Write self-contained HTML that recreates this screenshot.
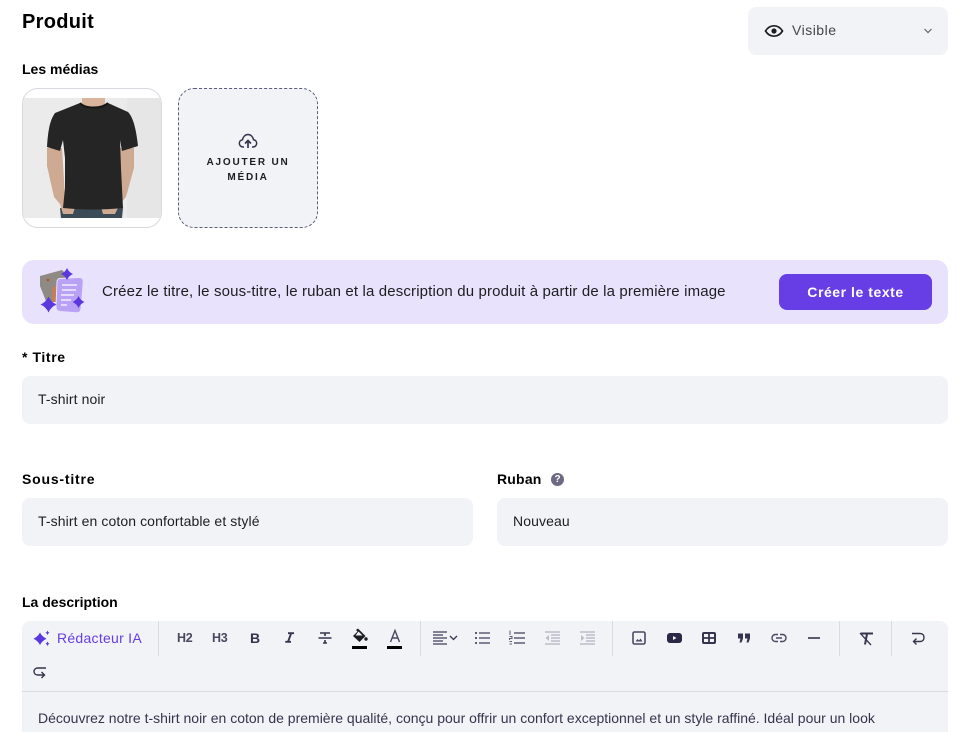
<!DOCTYPE html>
<html lang="fr"><head><meta charset="utf-8"><title>Produit</title>
<style>
html,body{margin:0;padding:0;background:#fff}
body{width:972px;height:732px;overflow:hidden;position:relative;font-family:"Liberation Sans",sans-serif;color:#1d1e20}
.a{position:absolute;white-space:nowrap}
.lbl{font-weight:700;font-size:14px;line-height:18px;color:#000}
.box{position:absolute;background:#f2f3f6;border-radius:8px}
.val{font-size:14px;line-height:18px;color:#1d1e20;letter-spacing:.1px}
.ic{position:absolute;overflow:visible;fill:none;stroke:#36344d;stroke-width:1.6}
.sep{position:absolute;width:1px;background:#dadce0;top:621px;height:35px}
</style></head><body>
<div class="a" style="left:22px;top:10px;font-size:20px;line-height:25px;font-weight:700;color:#000;letter-spacing:.3px">Produit</div>
<div class="a lbl" style="left:22px;top:60px">Les médias</div>

<div class="box" style="left:748px;top:7px;width:200px;height:48px"></div>
<svg class="ic" style="left:764px;top:22px" width="20" height="18" viewBox="0 0 20 18"><path d="M1.5 9C4 5 7 3.8 10 3.8S16 5 18.5 9C16 13 13 14.2 10 14.2S4 13 1.5 9Z" style="stroke:#1d1e20;stroke-width:1.7"/><circle cx="10" cy="9" r="2.6" style="fill:#1d1e20;stroke:none"/></svg>
<div class="a" style="left:792px;top:21px;font-size:14px;line-height:18px;color:#43454a;letter-spacing:.5px">Visible</div>
<svg class="ic" style="left:923px;top:27px" width="10" height="8" viewBox="0 0 10 8"><path d="M1.5 2L5 5.5 8.5 2" style="stroke:#60626a;stroke-width:1.2"/></svg>

<div class="a" style="left:22px;top:88px;width:138px;height:138px;border:1px solid #d8dae0;border-radius:16px;overflow:hidden;background:#fff">
<svg style="position:absolute;left:-1px;top:9px" width="140" height="120" viewBox="0 0 140 120">
<rect width="140" height="120" fill="#ebebec"/>
<rect x="105" width="35" height="120" fill="#e6e6e7"/>
<path d="M60 0H83V9L71 14 60 9Z" fill="#d9b59d"/>
<path d="M38 110H101L100 120H39Z" fill="#3a4a56"/>
<path d="M25 50L25 68 32 99 38 106 41 116 51 116 53 109 43 98 40 50Z" fill="#cfaa92"/>
<path d="M112 50L112 70 104 99 98 106 93 116 81 116 79 109 93 98 98 50Z" fill="#cfaa92"/>
<path d="M58 5C63 10 80 10 86 5L106 14C111 19 114 30 116 48L100 53 98 42 99 70 101 110C82 112 60 112 41 110L43 90 43 60 41 42 38 53 25 49C26 32 28 22 33 15Z" fill="#252526"/>
<path d="M58 5C63 11 80 11 86 5" fill="none" stroke="#161616" stroke-width="2"/>
</svg></div>

<div class="a" style="left:178px;top:88px;width:138px;height:138px;border:1px dashed #5d5b78;border-radius:16px;background:#f2f3f6"></div>
<svg class="ic" style="left:238px;top:133px" width="20" height="16" viewBox="0 0 20 16"><path d="M6 14H5.2C3 14 1.3 12.3 1.3 10.3 1.3 8.4 2.7 7 4.5 6.7 5 3.8 7.3 1.5 10 1.5 12.7 1.5 15 3.8 15.5 6.7 17.3 7 18.7 8.4 18.7 10.3 18.7 12.3 17 14 14.8 14H14" style="stroke-width:1.5"/><path d="M10 15V8M7 10.5L10 7.5 13 10.5" style="stroke-width:1.7"/></svg>
<div class="a" style="left:178px;top:155px;width:140px;text-align:center;font-size:10px;line-height:15px;font-weight:700;letter-spacing:1.8px;color:#1d1e20;white-space:normal">AJOUTER UN<br>MÉDIA</div>

<div class="box" style="left:22px;top:260px;width:926px;height:64px;background:#e9e2fd;border-radius:12px"></div>
<svg style="position:absolute;left:38px;top:268px" width="50" height="48" viewBox="0 0 50 48">
<path d="M2 8L24 2 28 6V34L8 33 2 18Z" fill="#8f8a83"/>
<path d="M14 20L22 15 24 34H14Z" fill="#c08058"/>
<circle cx="10" cy="12" r="1.4" fill="#b5532a"/>
<path d="M22 10.5L41 9.5C44 9.300 45.5 11 45.3 14L43 41C42.7 44 41 45 38 44.7L22 43.5C19 43.2 17.800 41.500 18 38.500L19 14C19.100 12 20 10.600 22 10.500Z" fill="#b9a2f5" stroke="#e9e2fd" stroke-width="1"/>
<g stroke="#e9e2fd" stroke-width="1.8" fill="none"><path d="M24 17H39M24 22H38M23 27H36M23 32H33M23 37H29"/></g>
<path d="M29 0Q30.800 4.200 35 6 30.800 7.800 29 12 27.200 7.800 23 6 27.200 4.200 29 0Z" fill="#5b37e0"/>
<path d="M10.500 28.500Q12.900 34.100 18.500 36.500 12.900 38.900 10.500 44.500 8.100 38.900 2.500 36.500 8.100 34.100 10.500 28.500Z" fill="#5b37e0"/>
<path d="M40.500 28Q42.300 32.200 46.500 34 42.300 35.800 40.500 40 38.700 35.800 34.500 34 38.700 32.200 40.500 28Z" fill="#5b37e0"/>
</svg>
<div class="a" style="left:102px;top:283px;font-size:15px;line-height:18px;color:#1d1e20;letter-spacing:.145px">Créez le titre, le sous-titre, le ruban et la description du produit à partir de la première image</div>
<div class="a" style="left:779px;top:274px;width:153px;height:36px;background:#673de6;border-radius:8px;color:#fff;font-weight:700;font-size:14px;line-height:36px;text-align:center;letter-spacing:.55px">Créer le texte</div>

<div class="a lbl" style="left:22px;top:348px;letter-spacing:.6px">* Titre</div>
<div class="box" style="left:22px;top:376px;width:926px;height:48px"></div>
<div class="a val" style="left:38px;top:390px">T-shirt noir</div>

<div class="a lbl" style="left:22px;top:470px;letter-spacing:.8px">Sous-titre</div>
<div class="box" style="left:22px;top:498px;width:451px;height:48px"></div>
<div class="a val" style="left:38px;top:512px">T-shirt en coton confortable et stylé</div>
<div class="a lbl" style="left:497px;top:470px;letter-spacing:.2px">Ruban</div>
<div class="a" style="left:551px;top:473px;width:13px;height:13px;border-radius:50%;background:#6d6b83;color:#fff;font-size:10px;font-weight:700;line-height:13px;text-align:center">?</div>
<div class="box" style="left:497px;top:498px;width:451px;height:48px"></div>
<div class="a val" style="left:513px;top:512px">Nouveau</div>

<div class="a lbl" style="left:22px;top:593px">La description</div>
<div class="a" style="left:22px;top:621px;width:926px;height:111px;background:#f2f3f6;border-radius:8px 8px 0 0"></div>
<div class="a" style="left:22px;top:691px;width:926px;height:1px;background:#d9dbe1"></div>

<svg class="ic" style="left:33px;top:629px" width="18" height="18" viewBox="0 0 18 18"><path d="M7 3.500Q9 7.600 13.500 9.800 9 12 7 16 5 12 .5 9.800 5 7.600 7 3.500Z" style="fill:#5b37e0;stroke:none"/><path d="M14.500 1.500Q15 3.300 16.500 3.800 15 4.300 14.500 6 14 4.300 12.500 3.800 14 3.300 14.500 1.500ZM14.500 12.500Q15 14.300 16.500 14.800 15 15.300 14.500 17 14 15.300 12.500 14.800 14 14.300 14.500 12.500Z" style="fill:#5b37e0;stroke:none"/></svg>
<div class="a" style="left:57px;top:629px;font-size:14px;line-height:18px;color:#673de6;letter-spacing:.27px">Rédacteur IA</div>
<div class="sep" style="left:158px"></div>
<div class="sep" style="left:420px"></div>
<div class="sep" style="left:612px"></div>
<div class="sep" style="left:839px"></div>
<div class="sep" style="left:891px"></div>

<div class="a" style="left:177px;top:630px;font-size:12.5px;line-height:16px;font-weight:700;color:#4a4861;letter-spacing:-.3px">H2</div>
<div class="a" style="left:212px;top:630px;font-size:12.5px;line-height:16px;font-weight:700;color:#4a4861;letter-spacing:-.3px">H3</div>
<div class="a" style="left:250px;top:630px;font-size:14px;line-height:16px;font-weight:700;color:#36344d">B</div>
<svg class="ic" style="left:285px;top:632px" width="9" height="11" viewBox="0 0 9 11"><path d="M3 1.200H9M6.200 1.200L3 9.800M0.300 9.800H6" style="stroke-width:1.900"/></svg>
<svg class="ic" style="left:318px;top:631px" width="14" height="14" viewBox="0 0 14 14"><path d="M2 2H12M0.500 7H13.500M7 2V5M7 9V11.500M5 12H9" style="stroke-width:1.600"/></svg>
<svg class="ic" style="left:352px;top:628px" width="16" height="22" viewBox="0 0 16 22"><path d="M6 0.500L13.500 8 7.500 14 1 8 5.500 3.500 4 2Z" style="fill:#1d1e20;stroke:none"/><path d="M3.500 7.500H10.500L6.500 3.500Z" style="fill:#f2f3f6;stroke:none"/><circle cx="14" cy="11" r="1.700" style="fill:#1d1e20;stroke:none"/><rect y="18" width="15" height="3" style="fill:#000;stroke:none"/></svg>
<svg class="ic" style="left:387px;top:628px" width="16" height="22" viewBox="0 0 16 22"><path d="M3.500 14L8 2.500 12.500 14M5 10H11" style="stroke:#4a4861;stroke-width:1.400"/><rect y="18" width="15" height="3" style="fill:#000;stroke:none"/></svg>

<svg class="ic" style="left:433px;top:631px" width="26" height="14" viewBox="0 0 26 14"><path d="M0 1H14M0 4H10M0 7H14M0 10H10M0 13H14" style="stroke:#5e5c74;stroke-width:1.500"/><path d="M17 5L20.500 8.500 24 5" style="stroke-width:1.300"/></svg>
<svg class="ic" style="left:475px;top:631px" width="15" height="14" viewBox="0 0 15 14"><path d="M4 2H15M4 7H15M4 12H15" style="stroke:#5e5c74;stroke-width:1.500"/><path d="M0 2H2M0 7H2M0 12H2" style="stroke:#5e5c74;stroke-width:2"/></svg>
<svg class="ic" style="left:509px;top:630px" width="16" height="15" viewBox="0 0 16 15"><path d="M5 3H16M5 8H16M5 13H16" style="stroke:#5e5c74;stroke-width:1.500"/><path d="M1 .5V5M.5 6.500H3V8.500H.5V10M.5 11.500H3M.5 14H3" style="stroke:#5e5c74;stroke-width:1"/></svg>
<svg class="ic" style="left:545px;top:631px" width="15" height="14" viewBox="0 0 15 14"><path d="M0 1H15M6 4H15M6 7H15M6 10H15M0 13H15" style="stroke:#bdbdc9;stroke-width:1.500"/><path d="M4 4V10L0.500 7Z" style="fill:#bdbdc9;stroke:none"/></svg>
<svg class="ic" style="left:580px;top:631px" width="15" height="14" viewBox="0 0 15 14"><path d="M0 1H15M6 4H15M6 7H15M6 10H15M0 13H15" style="stroke:#bdbdc9;stroke-width:1.500"/><path d="M1 4V10L4.500 7Z" style="fill:#bdbdc9;stroke:none"/></svg>

<svg class="ic" style="left:632px;top:631px" width="14" height="14" viewBox="0 0 14 14"><rect x="1" y="1" width="12" height="12" rx="1.500" style="stroke:#4a4861;stroke-width:1.600"/><path d="M3.500 10.500L5.500 8 7 9.500 8.500 7.500 10.500 10.500Z" style="fill:#4a4861;stroke:none"/></svg>
<svg class="ic" style="left:667px;top:633px" width="15" height="10" viewBox="0 0 15 10"><rect width="15" height="10" rx="3" style="fill:#2a2845;stroke:none"/><path d="M6 3V7L9.500 5Z" style="fill:#f2f3f6;stroke:none"/></svg>
<svg class="ic" style="left:702px;top:632px" width="14" height="12" viewBox="0 0 14 12"><rect x="1" y="1" width="12" height="10" rx="1" style="stroke-width:2"/><path d="M1 6H13M7 1V11" style="stroke-width:1.800"/></svg>
<svg class="ic" style="left:738px;top:633px" width="12" height="10" viewBox="0 0 12 10"><path d="M0 .5H5V5.500L3.500 9.500H1.500L2.500 5.500H0ZM7 .5H12V5.500L10.500 9.500H8.500L9.500 5.500H7Z" style="fill:#36344d;stroke:none"/></svg>
<svg class="ic" style="left:771px;top:632px" width="16" height="12" viewBox="0 0 16 12"><path d="M7 2.500H4.500C2.500 2.500 1 4 1 6S2.500 9.500 4.500 9.500H7M9 2.500H11.500C13.500 2.500 15 4 15 6S13.500 9.500 11.500 9.500H9M5 6H11" style="stroke:#4a4861;stroke-width:1.400"/></svg>
<svg class="ic" style="left:808px;top:637px" width="12" height="2" viewBox="0 0 12 2"><path d="M0 1H12" style="stroke:#4a4861;stroke-width:1.800"/></svg>
<svg class="ic" style="left:858px;top:631px" width="16" height="16" viewBox="0 0 16 16"><path d="M3 2.500H15" style="stroke-width:2"/><path d="M9 3L7 13.500" style="stroke-width:2"/><path d="M2 2L13 14" style="stroke-width:1.300"/></svg>
<svg class="ic" style="left:911px;top:631px" width="14" height="16" viewBox="0 0 14 16"><path d="M1 2.500H9C11.500 2.500 13 4.200 13 6.500S11.500 10.500 9 10.500H2.500M5.500 7.500L2.500 10.500 5.500 13.500" style="stroke-width:1.400"/></svg>
<svg class="ic" style="left:33px;top:665px" width="14" height="16" viewBox="0 0 14 16"><path d="M13 3H5C2.500 3 1 4.500 1 6.500S2.500 10 5 10H11.500M8.500 7L11.500 10 8.500 13" style="stroke-width:1.400"/></svg>

<div class="a" style="left:38px;top:709px;font-size:14px;line-height:18px;color:#36344d">Découvrez notre t-shirt noir en coton de première qualité, conçu pour offrir un confort exceptionnel et un style raffiné. Idéal pour un look</div>
</body></html>
